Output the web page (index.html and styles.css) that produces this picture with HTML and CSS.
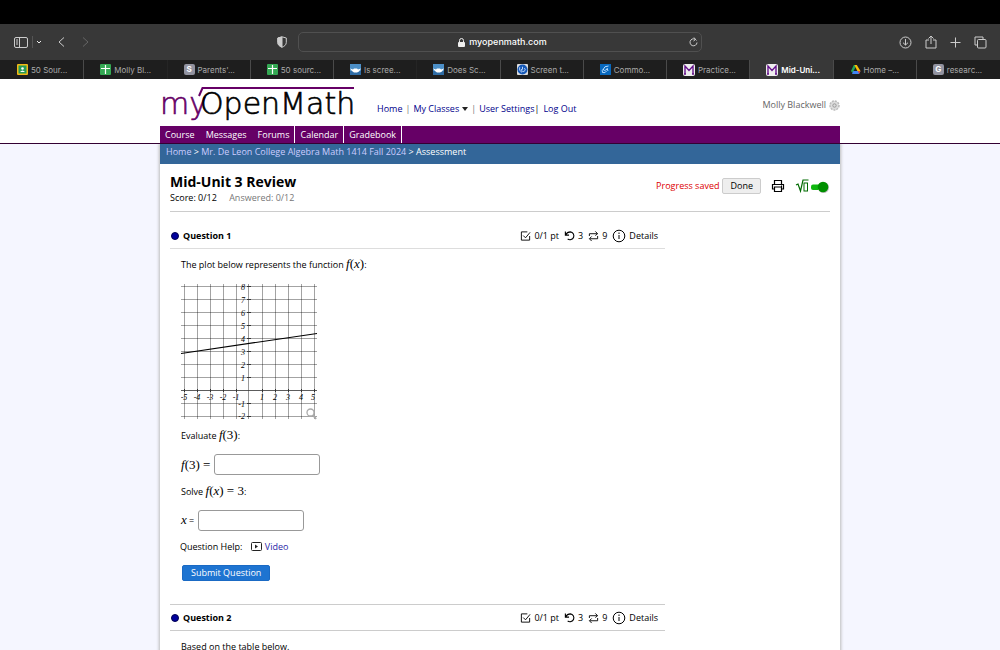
FILE: index.html
```html
<!DOCTYPE html>
<html lang="en">
<head>
<meta charset="utf-8">
<title>Mid-Unit 3 Review</title>
<link rel="stylesheet" href="styles.css">
</head>
<body>
<svg class="sprite" aria-hidden="true">
  <symbol id="sheet" viewBox="0 0 11 11"><rect width="11" height="11" rx="1" fill="#34a853"/><path d="M5.500 1v9M1 4.500h9" stroke="#fff" stroke-width="1.200"/></symbol>
  <symbol id="boat" viewBox="0 0 11 11"><rect width="11" height="11" fill="#4c8fc7"/><rect y="7" width="11" height="4" fill="#2f6ca5"/><path d="M0 4.500l3 1 1-1h3l1 1 3-1-2 3-2 1H4L2 7z" fill="#fff"/></symbol>
  <symbol id="mom" viewBox="0 0 12 12"><rect width="12" height="12" rx="2" fill="#eee"/><path d="M2 10.500V2L6 6.500 10 2v8.500M1 10h2M9 10h2" fill="none" stroke="#65128c" stroke-width="1.400"/></symbol>
  <symbol id="check" viewBox="0 0 12 12"><path d="M10.500 6v4.500h-9v-9H8M3.500 5.500L6 8l5-6" fill="none" stroke="#000"/></symbol>
  <symbol id="undo" viewBox="0 0 12 12"><path d="M1.500 1v4h4M1.500 5C3 2.500 5 1.500 7 1.500a4.300 4.300 0 1 1-3 7.800" fill="none" stroke="#000" stroke-width="1.200"/></symbol>
  <symbol id="repeat" viewBox="0 0 12 12"><path d="M1.500 6V3.500H10M8 1l2.500 2.500L8 5.500M10.500 6v3H2M4 6.500L1.500 9 4 11.500" fill="none" stroke="#000"/></symbol>
  <symbol id="info" viewBox="0 0 14 14"><circle cx="7" cy="7" r="5.800" fill="none" stroke="#000"/><path d="M7 6v4M7 3.500V5" stroke="#000"/></symbol>
</svg>

<header class="browser">
  <div class="toolbar">
    <div class="tools">
      <button class="tool" aria-label="Sidebar"><svg width="14" height="11" viewBox="0 0 14 11"><rect x=".5" y=".5" width="13" height="10" rx="1.500"/><path d="M5.500.5v10M2 3h2M2 5h2M2 7h2"/></svg></button>
      <span class="divider"></span>
      <button class="tool" aria-label="Tab groups"><svg width="6" height="4" viewBox="0 0 6 4"><path d="M1 1l2 2 2-2" stroke="#eee"/></svg></button>
      <button class="tool back" aria-label="Back"><svg width="7" height="10" viewBox="0 0 7 10"><path d="M6 .5L1 5l5 4.500"/></svg></button>
      <button class="tool forward" aria-label="Forward"><svg width="7" height="10" viewBox="0 0 7 10"><path d="M1 .5L6 5 1 9.500" stroke="#666"/></svg></button>
      <button class="tool shield" aria-label="Privacy report"><svg width="10" height="12" viewBox="0 0 10 12"><path d="M5 .8L9.300 2v4.500C9.300 9 7 10.500 5 11.300 3 10.500.7 9 .7 6.500V2z"/><path d="M5 1v10C3 10.500 1 9 1 6.500V2z" fill="#ccc"/></svg></button>
    </div>
    <div class="address">
      <span class="host"><svg width="7" height="9" viewBox="0 0 7 9"><rect y="4" width="7" height="5" rx="1" fill="#eee"/><path d="M1.500 4V2.500a2 2 0 0 1 4 0V4" stroke="#eee" fill="none"/></svg>myopenmath.com</span>
      <button class="tool" aria-label="Reload"><svg width="9" height="10" viewBox="0 0 9 10"><path d="M7.500 3.500A3.500 3.500 0 1 0 8 5.500M5 .5l1.500 2L4.500 4"/></svg></button>
    </div>
    <div class="tools right">
      <button class="tool" aria-label="Downloads"><svg width="13" height="13" viewBox="0 0 13 13"><circle cx="6.500" cy="6.500" r="5.500"/><path d="M6.500 3v6M4 6.700L6.500 9 9 6.700"/></svg></button>
      <button class="tool" aria-label="Share"><svg width="12" height="14" viewBox="0 0 12 14"><path d="M4 5H1v8h10V5H8M6 9V1M3.500 3.500L6 1l2.500 2.500"/></svg></button>
      <button class="tool" aria-label="New tab"><svg width="11" height="11" viewBox="0 0 11 11"><path d="M5.500.5v10M.5 5.500h10"/></svg></button>
      <button class="tool" aria-label="Tab overview"><svg width="13" height="13" viewBox="0 0 13 13"><path d="M3.500 9H1V1h8v2.500"/><rect x="3.500" y="3.500" width="8.500" height="8.500" rx="1"/></svg></button>
    </div>
  </div>
  <nav class="tabs" aria-label="Tabs">
    <a href="#"><svg viewBox="0 0 11 11"><rect width="11" height="11" rx="1" fill="#f5ba15"/><rect x="1.500" y="1.500" width="8" height="8" fill="#259b56"/><circle cx="5.500" cy="4.500" r="1.300" fill="#fff"/><path d="M3 8q2.500-3 5 0z" fill="#fff"/></svg>50 Sour...</a>
    <a href="#" class="soft"><svg><use href="#sheet"/></svg>Molly Bl...</a>
    <a href="#"><span class="letter">S</span>Parents'...</a>
    <a href="#"><svg><use href="#sheet"/></svg>50 sourc...</a>
    <a href="#" class="soft"><svg><use href="#boat"/></svg>Is scree...</a>
    <a href="#"><svg><use href="#boat"/></svg>Does Sc...</a>
    <a href="#"><svg viewBox="0 0 12 12"><rect width="12" height="12" rx="1" fill="#ddd"/><circle cx="6" cy="6" r="5.500" fill="#1558b8"/><path d="M3 3.500q-1 4 2.500 5.500M5 5.500a2 2 0 1 0 3-1M6 3v3" fill="none" stroke="#cde2ff"/></svg>Screen t...</a>
    <a href="#"><svg viewBox="0 0 11 11"><rect width="11" height="11" fill="#0868bd"/><path d="M8.500 2Q4 2 3.500 5t4 0M3.500 5q-2 1-1 3.500 3 1 4-1.500M7 4l1 3" fill="none" stroke="#b7dcff"/></svg>Commo...</a>
    <a href="#"><svg class="wide"><use href="#mom"/></svg>Practice...</a>
    <a href="#" class="current" aria-current="page"><svg class="wide"><use href="#mom"/></svg>Mid-Uni...</a>
    <a href="#"><svg viewBox="0 0 11 11"><path d="M3.800 1h3l-4.300 8L1 7z" fill="#20a45b"/><path d="M4.500 1h2.300L10.500 7H7.300z" fill="#fbbc04"/><path d="M3.300 7h7.200L9 10H2z" fill="#4285f4"/><path d="M8 7h2.500L9 10z" fill="#ea4335"/></svg>Home –...</a>
    <a href="#"><span class="letter">G</span>researc...</a>
  </nav>
</header>

<div class="masthead">
  <div class="wrap top">
    <div class="brand"><span class="my">my</span><svg class="radical" width="156" height="10" viewBox="0 0 156 10"><path d="M1 9L4.500 1H156" fill="none" stroke="#606" stroke-width="2"/></svg><span class="open">OpenMath</span></div>
    <nav class="links"><a href="#">Home</a><i>|</i><a href="#">My Classes</a><span class="caret"></span><i>|</i><a href="#">User Settings</a><b>|</b><a href="#">Log Out</a></nav>
    <div class="user">Molly Blackwell <svg width="11" height="11" viewBox="0 0 11 11"><circle cx="5.500" cy="5.500" r="4.500" fill="#ddd" stroke="#bbb" stroke-width="1.500" stroke-dasharray="2 1"/><circle cx="5.500" cy="5.500" r="1.700" fill="none" stroke="#999"/></svg></div>
  </div>
  <nav class="wrap menu"><a href="#">Course</a><a href="#">Messages</a><a href="#" class="rule">Forums</a><a href="#" class="rule">Calendar</a><a href="#" class="rule">Gradebook</a></nav>
</div>

<main class="wrap page">
  <nav class="crumbs"><a href="#">Home</a> &gt; <a href="#">Mr. De Leon College Algebra Math 1414 Fall 2024</a> &gt; Assessment</nav>
  <div class="content">
    <header class="assess">
      <div><h1>Mid-Unit 3 Review</h1><p class="score">Score: 0/12 <span>Answered: 0/12</span></p></div>
      <div class="actions"><span class="saved">Progress saved</span><button class="done">Done</button>
        <button class="icon" aria-label="Print"><svg width="14" height="14" viewBox="0 0 14 14"><path d="M3.500 5.500v-4h7v4M3.500 10h-2V5.500h11V10h-2M3.500 8h7v4.500h-7zM10 7h1" fill="none" stroke="#000" stroke-width="1.200"/></svg></button>
        <button class="icon" aria-label="Equation editor"><svg width="35" height="16" viewBox="0 0 35 16"><path d="M1 7l2-1 2.500 7L8 2h5.500" fill="none" stroke="#006b00" stroke-width="1.200"/><rect x="9" y="5" width="3.500" height="8" fill="none" stroke="#006b00"/><rect x="16" y="6.500" width="14" height="5.500" rx="2" fill="#0fb80f"/><circle cx="28.500" cy="9.500" r="5.500" fill="#bbb"/><circle cx="28" cy="9" r="5.300" fill="#009000"/></svg></button>
      </div>
    </header>

    <section class="question">
      <div class="qhead"><h2><span class="dot"></span>Question 1</h2><div class="info"><svg><use href="#check"/></svg><span>0/1 pt</span><svg><use href="#undo"/></svg><span>3</span><svg><use href="#repeat"/></svg><span>9</span><svg class="large"><use href="#info"/></svg><a href="#">Details</a></div></div>
      <div class="body">
        <p>The plot below represents the function <span class="math"><em>f</em>(<em>x</em>)</span>:</p>
        <svg class="plot" width="137" height="138" viewBox="181 283 137 138" role="img" aria-label="Graph of a line">
          <g stroke="#000" stroke-opacity=".36"><path d="M184.500 284v135M197.500 284v135M210.500 284v135M223.500 284v135M236.500 284v135M262.500 284v135M275.500 284v135M288.500 284v135M301.500 284v135M314.500 284v135M181 286.500h136M181 299.500h136M181 312.500h136M181 325.500h136M181 338.500h136M181 351.500h136M181 364.500h136M181 377.500h136M181 403.500h136M181 416.500h136"/></g>
          <g stroke="#333"><path d="M181 390.500h136" stroke-opacity=".8"/><path d="M248.500 284v135" stroke-opacity=".5"/><path d="M184.500 389v3M197.500 389v3M210.500 389v3M223.500 389v3M236.500 389v3M262.500 389v3M275.500 389v3M288.500 389v3M301.500 389v3M314.500 389v3M247 286.500h4M247 299.500h4M247 312.500h4M247 325.500h4M247 338.500h4M247 351.500h4M247 364.500h4M247 377.500h4M247 403.500h4M247 416.500h4"/></g>
          <path d="M181 353.500L317 333.500" stroke="#000" stroke-width="1.200"/>
          <g class="ticks" text-anchor="middle"><text x="184" y="400">-5</text><text x="197" y="400">-4</text><text x="210" y="400">-3</text><text x="223" y="400">-2</text><text x="236" y="400">-1</text><text x="262" y="400">1</text><text x="275" y="400">2</text><text x="288" y="400">3</text><text x="301" y="400">4</text><text x="313" y="400">5</text></g>
          <g class="ticks" text-anchor="end"><text x="245" y="290">8</text><text x="245" y="303">7</text><text x="245" y="316">6</text><text x="245" y="329">5</text><text x="245" y="342">4</text><text x="245" y="355">3</text><text x="245" y="368">2</text><text x="245" y="381">1</text><text x="245" y="407">-1</text><text x="245" y="419">-2</text></g>
          <g fill="none" stroke="#aaa"><circle cx="310.500" cy="412.500" r="3.500" stroke-width="1.300"/><path d="M313 415l3 4" stroke-width="2"/></g>
        </svg>
        <p>Evaluate <span class="math"><em>f</em>(3)</span>:</p>
        <p class="entry"><label for="a1" class="math"><em>f</em>(3) =</label><input id="a1" type="text"></p>
        <p>Solve <span class="math"><em>f</em>(<em>x</em>) = 3</span>:</p>
        <p class="entry tight"><label for="a2"><span class="math"><em>x</em></span> =</label><input id="a2" type="text"></p>
      </div>
      <p class="help">Question Help: <a href="#"><svg width="11" height="9" viewBox="0 0 11 9"><rect x=".5" y=".5" width="10" height="8" rx="1" fill="none" stroke="#222"/><path d="M4 2.500l3 2-3 2z" fill="#222"/></svg>Video</a></p>
      <button class="submit">Submit Question</button>
    </section>

    <section class="question second">
      <div class="qhead"><h2><span class="dot"></span>Question 2</h2><div class="info"><svg><use href="#check"/></svg><span>0/1 pt</span><svg><use href="#undo"/></svg><span>3</span><svg><use href="#repeat"/></svg><span>9</span><svg class="large"><use href="#info"/></svg><a href="#">Details</a></div></div>
      <div class="body"><p>Based on the table below.</p></div>
    </section>
  </div>
</main>
</body>
</html>
```
FILE: styles.css
```css
* { box-sizing: border-box; }
html { height: 100%; overflow: hidden; }
body { margin: 0; height: 100%; overflow: hidden; display: flex; flex-direction: column; background: #f5f6ff; color: #000; font: 500 9px/14px "Trebuchet MS", "Open Sans", sans-serif; }
.sprite { position: absolute; width: 0; height: 0; }
a { text-decoration: none; color: #00008b; }
p, h1, h2 { margin: 0; }
button { font: inherit; }
.browser { flex: none; background: #383838; border-top: 24px solid #000; color: #ccc; font-family: Inter, sans-serif; }
.toolbar { height: 36px; display: grid; grid-template-columns: 298px 1fr 298px; align-items: center; }
.tools { display: flex; align-items: center; padding-left: 14px; }
.tools.right { justify-content: flex-end; gap: 13px; padding: 0 13px 0 0; }
.tool { border: 0; padding: 0; background: none; display: flex; }
.tool svg { fill: none; stroke: #ccc; }
.divider { width: 1px; height: 12px; margin: 0 3px 0 4px; background: #555; }
.back { margin-left: 16px; }
.forward { margin-left: 17px; }
.shield { margin-left: auto; margin-right: 11px; }
.address { height: 20px; border: 1px solid #505050; border-radius: 5px; display: flex; align-items: center; padding: 0 3px 0 17px; }
.host { flex: 1; display: flex; justify-content: center; align-items: center; gap: 4px; color: #fff; font-size: 9px; font-weight: 500; }
.tabs { display: grid; grid-template-columns: repeat(12, minmax(0, 1fr)); height: 19px; padding-left: 1px; background: #1e1e1e; }
.tabs a { display: flex; align-items: center; gap: 3px; padding-left: 16px; border-right: 1px solid #4a4a4a; color: #aaa; font-size: 8px; font-weight: 400; white-space: nowrap; overflow: hidden; }
.tabs a.soft { border-color: #252525; }
.tabs a.current { background: #383838; color: #fff; font-weight: 600; }
.tabs a:last-child { border: 0; }
.tabs svg, .letter { width: 11px; height: 11px; flex: none; }
.tabs svg.wide { width: 12px; height: 12px; }
.letter { background: #9293a0; color: #fff; border-radius: 2px; text-align: center; font-weight: 700; line-height: 11px; }
.masthead { flex: none; background: #fff; border-bottom: 1px solid #303; }
.wrap { width: 68%; margin: 0 auto; }
.top { height: 47px; display: flex; align-items: flex-end; }
.brand { position: relative; display: flex; width: 217px; padding-bottom: 2px; font: 200 30px/40px "DejaVu Sans", sans-serif; white-space: nowrap; -webkit-text-stroke: thin currentColor; }
.my { color: #606; }
.open { margin-left: -7px; }
.radical { position: absolute; left: 38px; top: 3px; }
.links { display: flex; align-items: center; padding-bottom: 10px; white-space: nowrap; }
.links i { font-style: normal; color: #777; margin: 0 3px; }
.links b { font-weight: 400; margin-right: 4px; }
.caret { border: 3px solid transparent; border-top: 4px solid #222; border-bottom: 0; margin-left: 3px; }
.user { margin-left: auto; padding-bottom: 14px; color: #666; display: flex; align-items: center; gap: 3px; }
.menu { display: flex; height: 17px; background: #606; }
.menu a { color: #fff; line-height: 17px; padding: 0 5px; border-right: 1px solid #606; }
.menu a.rule { border-color: #fff; }
.page { flex: 1 0 auto; background: #fff; box-shadow: 0 0 3px 1px #bbb; clip-path: inset(0 -4px); }
.crumbs { height: 20px; background: #369; color: #fff; padding: 1px 6px; }
.crumbs a { color: #ccf; }
.content { padding: 0 10px; }
.assess { display: flex; justify-content: space-between; padding: 9px 0 6px; border-bottom: 1px solid #ccc; }
h1 { font-size: 14px; line-height: 18px; font-weight: 700; }
.score span { color: #777; margin-left: 10px; }
.actions { display: flex; align-items: center; height: 26px; }
.saved { color: #d00; margin-right: 3px; }
.done { border: 1px solid #ccc; border-radius: 2px; background: #eee; padding: 0 7px; height: 16px; line-height: 14px; }
.icon { display: flex; border: 0; padding: 0; background: none; margin-left: 10px; }
.question { padding-top: 12px; }
.qhead { width: 75%; height: 25px; display: flex; justify-content: space-between; align-items: center; border-bottom: 1px solid #ddd; }
h2 { display: flex; align-items: center; gap: 4px; font-size: 9px; line-height: 14px; font-weight: 700; }
.dot { width: 8px; height: 8px; margin-left: 1px; border-radius: 50%; background: #00009c; border: 1px solid #000050; }
.info { display: flex; align-items: center; gap: 3px; padding-right: 7px; }
.info svg { width: 11px; height: 12px; }
.info svg.large { width: 14px; height: 14px; }
.info span + svg { margin-left: 2px; }
.info a { color: #000; }
.body { padding: 8px 11px 0; }
.body p { line-height: 16px; }
.math { font: 13px/14px "Liberation Serif", serif; }
.plot { display: block; margin: 10px 0 7px; }
.ticks { font: italic 8px "Liberation Serif", serif; }
.body .entry { display: flex; align-items: center; gap: 4px; height: 21px; margin: 10px 0 9px; }
.body .tight { margin: 10px 0 0; }
.entry input { width: 106px; height: 21px; border: 1px solid #999; border-radius: 3px; background: #fff; }
.help { margin: 9px 0 11px 10px; }
.help a { color: #2a1fa8; margin-left: 6px; }
.help svg { margin-right: 3px; vertical-align: -1px; }
.submit { display: block; margin-left: 12px; height: 16px; line-height: 14px; padding: 0 8px; border: 1px solid #1a6ac4; border-radius: 2px; background: #1e74d1; color: #fff; }
.second { padding: 0; margin-top: 23px; }
.second .qhead { height: 27px; border-top: 1px solid #ccc; border-bottom-color: #ccc; }
```
